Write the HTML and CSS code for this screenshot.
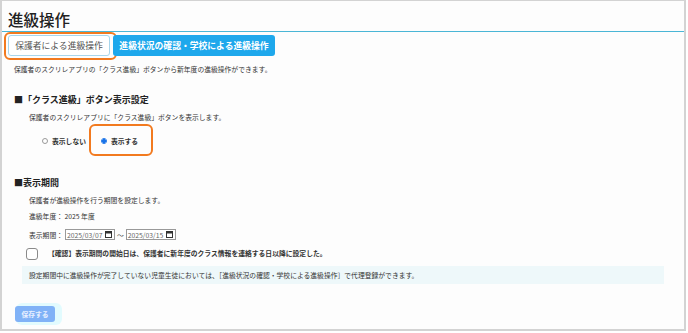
FILE: index.html
```html
<!DOCTYPE html>
<html lang="ja">
<head>
    <meta charset="UTF-8">
    <title>進級操作</title>
    <link rel="stylesheet" href="styles.css">
</head>
<body>
    <div class="frame">
        <div class="page-head">
            <h1>進級操作</h1>
        </div>

        <div class="tabs">
            <div class="tab tab-active">
                保護者による進級操作
                <span class="mark mark-tab"></span>
            </div>
            <div class="tab tab-link">進級状況の確認・学校による進級操作</div>
        </div>

        <p class="lead">保護者のスクリレアプリの「クラス進級」ボタンから新年度の進級操作ができます。</p>

        <h2 class="sec-title">■「クラス進級」ボタン表示設定</h2>
        <p class="note">保護者のスクリレアプリに「クラス進級」ボタンを表示します。</p>
        <div class="radios">
            <label class="radio"><span class="dot"></span>表示しない</label>
            <label class="radio radio-on">
                <span class="dot"></span>表示する
                <span class="mark mark-radio"></span>
            </label>
        </div>

        <h2 class="sec-title sec-period">■表示期間</h2>
        <p class="note">保護者が進級操作を行う期間を設定します。</p>
        <p class="note">進級年度： 2025 年度</p>
        <div class="note period">
            <span>表示期間：</span>
            <span class="date">2025/03/07
                <svg width="7" height="7" viewBox="0 0 7 7"><rect x="0.5" y="0.5" width="6" height="6" fill="none" stroke="#333"/><rect x="0.5" y="0.5" width="6" height="2" fill="#333"/></svg>
            </span>
            <span class="tilde">〜</span>
            <span class="date">2025/03/15
                <svg width="7" height="7" viewBox="0 0 7 7"><rect x="0.5" y="0.5" width="6" height="6" fill="none" stroke="#333"/><rect x="0.5" y="0.5" width="6" height="2" fill="#333"/></svg>
            </span>
        </div>
        <label class="confirm">
            <span class="check"></span>
            <span>【確認】表示期間の開始日は、保護者に新年度のクラス情報を連絡する日以降に設定した。</span>
        </label>
        <div class="info">設定期間中に進級操作が完了していない児童生徒においては、［進級状況の確認・学校による進級操作］で代理登録ができます。</div>

        <div class="actions">
            <button class="save" disabled>保存する</button>
        </div>
    </div>
</body>
</html>
```

FILE: styles.css
```css
body {
    margin: 0;
    background-color: #fff;
    font-family: "Noto Sans CJK JP", "Noto Sans", sans-serif;
    color: #333;
}

.frame {
    box-sizing: border-box;
    width: 686px;
    height: 331px;
    border: 2px solid #d3d3d3;
    border-top-width: 1px;
    background-color: #fdfdfd;
}

.page-head {
    padding: 8px 6px 2px;
    border-bottom: 1px solid #4ab6d6;
}

h1 {
    margin: 0;
    font-size: 15.5px;
    line-height: 20px;
    font-weight: 500;
    color: #222;
}

.tabs {
    display: flex;
    gap: 3px;
    margin: 3px 0 0 6px;
}

.tab {
    position: relative;
    box-sizing: border-box;
    height: 21px;
    display: flex;
    align-items: center;
    justify-content: center;
    font-size: 8.8px;
    border-radius: 3px;
}

.tab-active {
    width: 102px;
    background-color: #fff;
    border: 1px solid #a8d6ec;
    color: #555;
}

.tab-link {
    width: 162px;
    background-color: #1ea8ec;
    color: #fff;
    font-weight: bold;
}

.mark {
    position: absolute;
    border: 2px solid #f27a1f;
    border-radius: 6px;
}

.mark-tab {
    left: -5px;
    right: -8px;
    top: -4px;
    bottom: -5px;
}

.lead {
    margin: 8px 0 0 12px;
    font-size: 6.8px;
    line-height: 10px;
}

.sec-title {
    margin: 20px 0 0 12px;
    font-size: 9px;
    line-height: 12px;
    font-weight: bold;
    color: #222;
}

.sec-period {
    margin-top: 31px;
}

.note {
    margin: 6px 0 0 27px;
    font-size: 6.8px;
    line-height: 10px;
}

.radios {
    display: flex;
    gap: 15px;
    margin: 14px 0 0 40px;
    font-size: 6.8px;
    line-height: 10px;
    font-weight: bold;
}

.radio {
    position: relative;
    display: flex;
    align-items: center;
    gap: 4px;
}

.dot {
    box-sizing: border-box;
    width: 6px;
    height: 6px;
    border: 1px solid #999;
    border-radius: 50%;
    background-color: #fff;
}

.radio-on .dot {
    border-color: #1a73e8;
    background: radial-gradient(circle, #1a73e8 0 1.6px, #fff 1.8px);
}

.mark-radio {
    left: -12px;
    right: -15px;
    top: -12px;
    bottom: -10px;
}

.period {
    display: flex;
    align-items: center;
    gap: 2px;
    margin-top: 7px;
    height: 13px;
}

.date {
    box-sizing: border-box;
    display: inline-flex;
    align-items: center;
    justify-content: space-between;
    width: 50px;
    height: 11px;
    padding: 0 2px 0 1px;
    border: 1px solid #999;
    background-color: #fff;
    color: #666;
}

.tilde {
    color: #444;
}

.confirm {
    display: flex;
    align-items: center;
    gap: 10px;
    margin: 6px 0 0 24px;
    font-size: 6.8px;
    line-height: 13px;
    font-weight: bold;
    color: #333;
}

.check {
    box-sizing: border-box;
    width: 12px;
    height: 12px;
    border: 1px solid #8a8a8a;
    border-radius: 3px;
    background-color: #fff;
}

.info {
    margin: 6px 20px 0 20px;
    padding: 4px 7px;
    background-color: #eef8fa;
    font-size: 6.8px;
    line-height: 10px;
}

.actions {
    margin: 14px 0 0 13px;
}

.save {
    width: 40px;
    height: 16px;
    padding: 0;
    border: none;
    border-radius: 3px;
    background-color: #80b2f7;
    color: #e8f0ff;
    font-family: inherit;
    font-size: 6.8px;
    font-weight: bold;
    box-shadow: 4px 0 0 3px #e2fbfe;
}
```
